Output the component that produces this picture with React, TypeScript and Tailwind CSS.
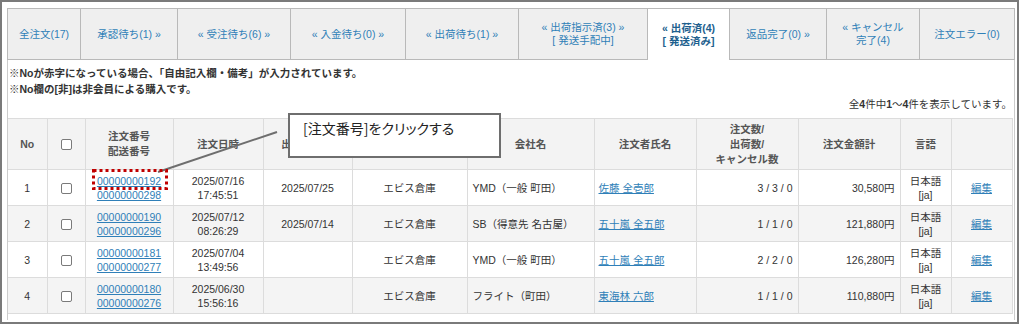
import React from "react";

const FONT = "font-['Liberation_Sans','Noto_Sans_CJK_JP',sans-serif]";

type Tab = { lines: string[]; w: string; active?: boolean; last?: boolean };

const tabs: Tab[] = [
  { lines: ["全注文(17)"], w: "w-[73px]" },
  { lines: ["承認待ち(1) »"], w: "w-[97px]" },
  { lines: ["« 受注待ち(6) »"], w: "w-[113px]" },
  { lines: ["« 入金待ち(0) »"], w: "w-[115px]" },
  { lines: ["« 出荷待ち(1) »"], w: "w-[113px]" },
  { lines: ["« 出荷指示済(3) »", "[ 発送手配中]"], w: "w-[129px]" },
  { lines: ["« 出荷済(4)", "[ 発送済み]"], w: "w-[82px]", active: true },
  { lines: ["返品完了(0) »"], w: "w-[97px]" },
  { lines: ["« キャンセル", "完了(4)"], w: "w-[93px]" },
  { lines: ["注文エラー(0)"], w: "w-[96px]", last: true },
];

type Row = {
  no: string;
  order: string;
  ship: string;
  date: string;
  time: string;
  shipDate: string;
  wh: string;
  company: string;
  name: string;
  qty: string;
  amount: string;
};

const rows: Row[] = [
  { no: "1", order: "00000000192", ship: "00000000298", date: "2025/07/16", time: "17:45:51", shipDate: "2025/07/25", wh: "エビス倉庫", company: "YMD（一般 町田）", name: "佐藤 全壱郎", qty: "3 / 3 / 0", amount: "30,580円" },
  { no: "2", order: "00000000190", ship: "00000000296", date: "2025/07/12", time: "08:26:29", shipDate: "2025/07/14", wh: "エビス倉庫", company: "SB（得意先 名古屋）", name: "五十嵐 全五郎", qty: "1 / 1 / 0", amount: "121,880円" },
  { no: "3", order: "00000000181", ship: "00000000277", date: "2025/07/04", time: "13:49:56", shipDate: "", wh: "エビス倉庫", company: "YMD（一般 町田）", name: "五十嵐 全五郎", qty: "2 / 2 / 0", amount: "126,280円" },
  { no: "4", order: "00000000180", ship: "00000000276", date: "2025/06/30", time: "15:56:16", shipDate: "", wh: "エビス倉庫", company: "フライト（町田）", name: "東海林 六郎", qty: "1 / 1 / 0", amount: "110,880円" },
];

function Checkbox() {
  return (
    <span className="inline-block w-[11px] h-[11px] border border-[#7a7a7a] rounded-[2px] bg-white align-middle" />
  );
}

const th = "border border-[#dcdcdc] bg-[#f3f3f3] text-[#555] font-bold text-center align-middle leading-[15px] p-0";
const td = "border border-[#dcdcdc] align-middle leading-[14px] p-0 h-[36px]";
const link = "text-[#2f7fb8] underline";

export default function App() {
  return (
    <div className={`${FONT} relative w-[1019px] h-[324px] border-2 border-[#7a7a7a] bg-white pl-[5px] pt-[6px] text-[10.5px] text-[#333] overflow-hidden`}>
      {/* tabs */}
      <div className="flex h-[52px]">
        {tabs.map((t, i) => (
          <div
            key={i}
            className={`${t.w} shrink-0 flex flex-col items-center justify-center border-t border-l border-[#b9b9b9] text-center leading-[13px] ${
              t.last ? "border-r" : ""
            } ${
              t.active
                ? "bg-white text-[#1d5f8e] font-bold"
                : "bg-[#efefef] text-[#2f7fb8] border-b"
            }`}
          >
            {t.lines.map((l, j) => (
              <div key={j}>{l}</div>
            ))}
          </div>
        ))}
      </div>

      {/* panel */}
      <div className="w-[1008px] h-[260px] border-l border-r border-[#cccccc] pr-[2px] pt-[5px]">
        <div className="font-bold leading-[16px] pl-[1px]">
          <div>※Noが赤字になっている場合、「自由記入欄・備考」が入力されています。</div>
          <div>※No欄の[非]は非会員による購入です。</div>
        </div>
        <div className="text-right leading-[14px] pr-0">
          全<b>4</b>件中<b>1</b>～<b>4</b>件を表示しています。
        </div>
        <table className="mt-[7px] table-fixed border-collapse w-[1004px]">
          <colgroup>
            <col className="w-[39px]" />
            <col className="w-[38px]" />
            <col className="w-[88px]" />
            <col className="w-[90px]" />
            <col className="w-[89px]" />
            <col className="w-[115px]" />
            <col className="w-[127px]" />
            <col className="w-[102px]" />
            <col className="w-[102px]" />
            <col className="w-[102px]" />
            <col className="w-[51px]" />
            <col className="w-[61px]" />
          </colgroup>
          <thead>
            <tr>
              <th className={`${th} h-[51px] border-l-0`}>No</th>
              <th className={th}><Checkbox /></th>
              <th className={th}>注文番号<br />配送番号</th>
              <th className={th}>注文日時</th>
              <th className={th}>出荷完了日</th>
              <th className={th}>出荷倉庫</th>
              <th className={th}>会社名</th>
              <th className={th}>注文者氏名</th>
              <th className={th}>注文数/<br />出荷数/<br />キャンセル数</th>
              <th className={th}>注文金額計</th>
              <th className={th}>言語</th>
              <th className={th}></th>
            </tr>
          </thead>
          <tbody>
            {rows.map((r, i) => (
              <tr key={i} className={i % 2 === 1 ? "bg-[#f4f4f4]" : "bg-white"}>
                <td className={`${td} text-center border-l-0`}>{r.no}</td>
                <td className={`${td} text-center`}><Checkbox /></td>
                <td className={`${td} text-center`}>
                  <div className={link}>{r.order}</div>
                  <div className={link}>{r.ship}</div>
                </td>
                <td className={`${td} text-center`}>
                  <div>{r.date}</div>
                  <div>{r.time}</div>
                </td>
                <td className={`${td} text-center`}>{r.shipDate}</td>
                <td className={`${td} text-center`}>{r.wh}</td>
                <td className={`${td} text-left pl-[5px]`}>{r.company}</td>
                <td className={`${td} text-left pl-[4px]`}>
                  <span className={link}>{r.name}</span>
                </td>
                <td className={`${td} text-right pr-[5px]`}>{r.qty}</td>
                <td className={`${td} text-right pr-[5px]`}>{r.amount}</td>
                <td className={`${td} text-center`}>
                  <div>日本語</div>
                  <div>[ja]</div>
                </td>
                <td className={`${td} text-center`}>
                  <span className={link}>編集</span>
                </td>
              </tr>
            ))}
          </tbody>
        </table>
      </div>

      {/* annotation overlays */}
      <svg className="absolute left-[-2px] top-[-2px] pointer-events-none" width="1021" height="325">
        <line x1="158" y1="172" x2="277" y2="132" stroke="#6e6e6e" strokeWidth="2" />
        <rect x="93.5" y="170.5" width="73" height="18" fill="none" stroke="#c00000" strokeWidth="3" strokeDasharray="3 3" />
      </svg>
      <div className="absolute left-[286px] top-[111px] w-[213px] h-[45px] border-2 border-[#6e6e6e] bg-white pl-[13px] pt-[3px] text-[14px] leading-[20px] text-[#222] font-['Noto_Sans_CJK_JP',sans-serif] [font-feature-settings:'palt']">
        [注文番号]をクリックする
      </div>
    </div>
  );
}
